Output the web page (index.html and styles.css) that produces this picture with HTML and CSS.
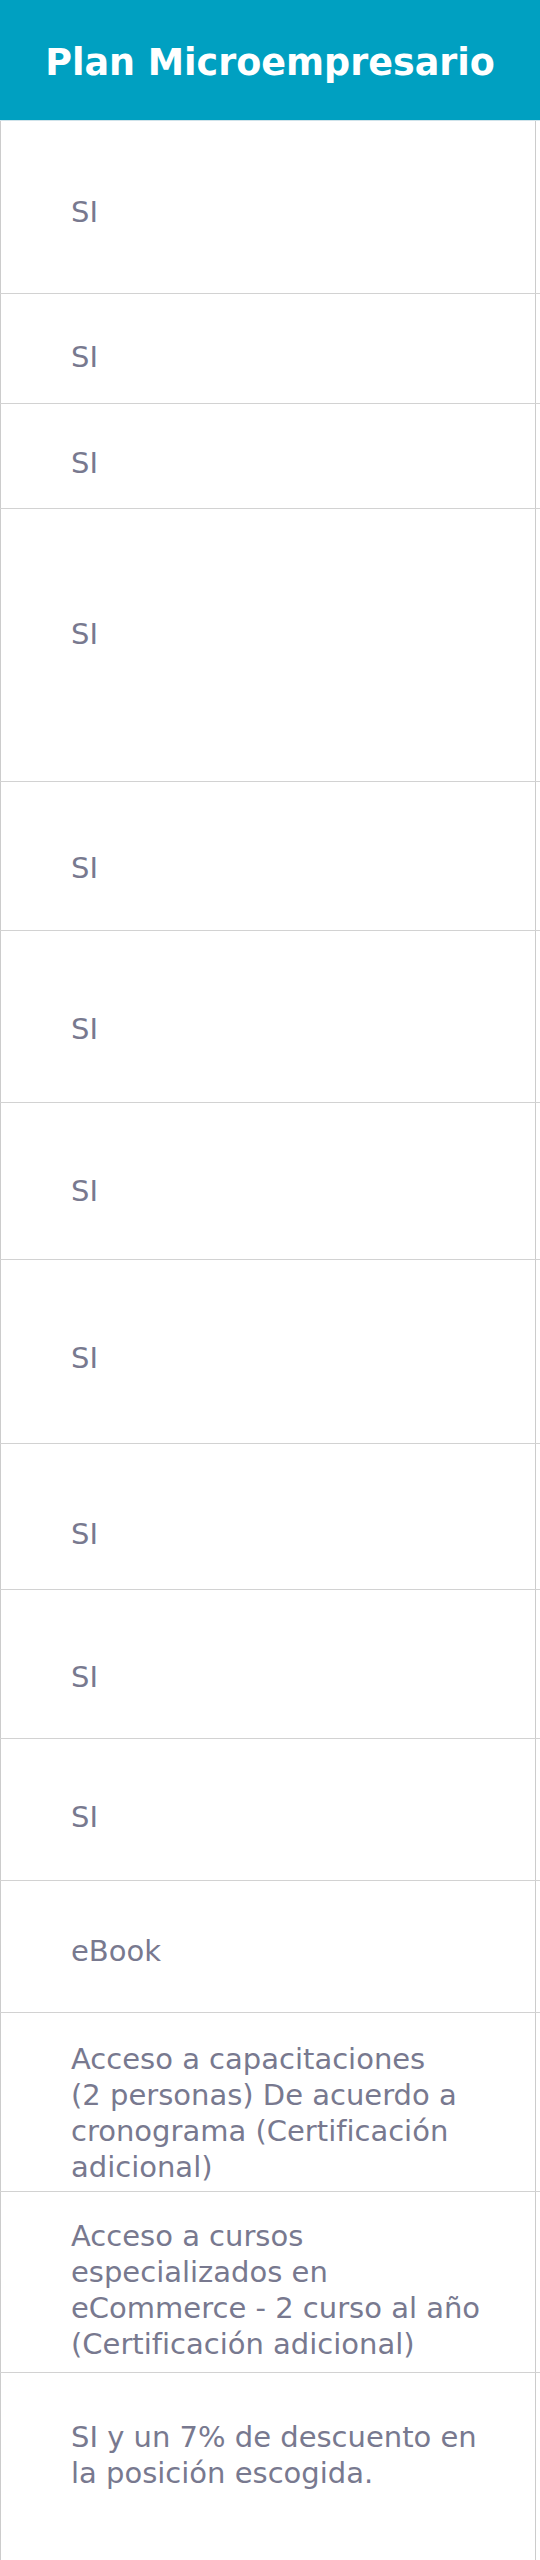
FILE: index.html
```html
<!DOCTYPE html>
<html lang="es">
<head>
<meta charset="utf-8">
<title>Plan Microempresario</title>
<link rel="stylesheet" href="styles.css">
</head>
<body>
<div class="plan">
  <div class="plan-head">
    <h1 class="plan-title">Plan Microempresario</h1>
  </div>
  <div class="rows">
    <div class="row r1"><div class="cell">SI</div></div>
    <div class="row r2"><div class="cell">SI</div></div>
    <div class="row r3"><div class="cell">SI</div></div>
    <div class="row r4"><div class="cell">SI</div></div>
    <div class="row r5"><div class="cell">SI</div></div>
    <div class="row r6"><div class="cell">SI</div></div>
    <div class="row r7"><div class="cell">SI</div></div>
    <div class="row r8"><div class="cell">SI</div></div>
    <div class="row r9"><div class="cell">SI</div></div>
    <div class="row r10"><div class="cell">SI</div></div>
    <div class="row r11"><div class="cell">SI</div></div>
    <div class="row r12"><div class="cell">eBook</div></div>
    <div class="row r13"><div class="cell">Acceso a capacitaciones<br>(2 personas) De acuerdo a cronograma (Certificación adicional)</div></div>
    <div class="row r14"><div class="cell">Acceso a cursos especializados en eCommerce - 2 curso al año (Certificación adicional)</div></div>
    <div class="row r15"><div class="cell">SI y un 7% de descuento en la posición escogida.</div></div>
  </div>
</div>
</body>
</html>
```

FILE: styles.css
```css
* {
  box-sizing: border-box;
}

html, body {
  margin: 0;
  padding: 0;
  background: #ffffff;
}

body {
  font-family: "DejaVu Sans", "Liberation Sans", sans-serif;
  width: 540px;
}

.plan {
  width: 540px;
}

.plan-head {
  height: 121px;
  background: #00a0c1;
  border-bottom: 1px solid #cfe3ea;
  display: flex;
  align-items: center;
  justify-content: center;
  padding-top: 6px;
}

.plan-title {
  margin: 0;
  color: #ffffff;
  font-family: "DejaVu Sans", sans-serif;
  font-weight: 700;
  font-size: 36.5px;
  line-height: 1.2;
  white-space: nowrap;
}

.rows {
  display: flex;
  flex-direction: column;
}

.row {
  width: 540px;
  border-bottom: 1px solid #d2d2d2;
}

.cell {
  width: 536px;
  height: 100%;
  border-left: 1px solid #cccccc;
  border-right: 1px solid #cccccc;
  padding-left: 70px;
  padding-right: 44px;
  color: #78798f;
  font-size: 29px;
  line-height: 36px;
}

.r1 { height: 173px; }
.r1 .cell { padding-top: 73px; }
.r2 { height: 110px; }
.r2 .cell { padding-top: 45px; }
.r3 { height: 105px; }
.r3 .cell { padding-top: 41px; }
.r4 { height: 273px; }
.r4 .cell { padding-top: 107px; }
.r5 { height: 149px; }
.r5 .cell { padding-top: 68px; }
.r6 { height: 172px; }
.r6 .cell { padding-top: 80px; }
.r7 { height: 157px; }
.r7 .cell { padding-top: 70px; }
.r8 { height: 184px; }
.r8 .cell { padding-top: 80px; }
.r9 { height: 146px; }
.r9 .cell { padding-top: 72px; }
.r10 { height: 149px; }
.r10 .cell { padding-top: 69px; }
.r11 { height: 142px; }
.r11 .cell { padding-top: 60px; }
.r12 { height: 132px; }
.r12 .cell { padding-top: 52px; }
.r13 { height: 179px; }
.r13 .cell { padding-top: 28px; }
.r14 { height: 181px; }
.r14 .cell { padding-top: 26px; }
.r15 { height: 240px; border-bottom: none; }
.r15 .cell { padding-top: 46px; }
```
